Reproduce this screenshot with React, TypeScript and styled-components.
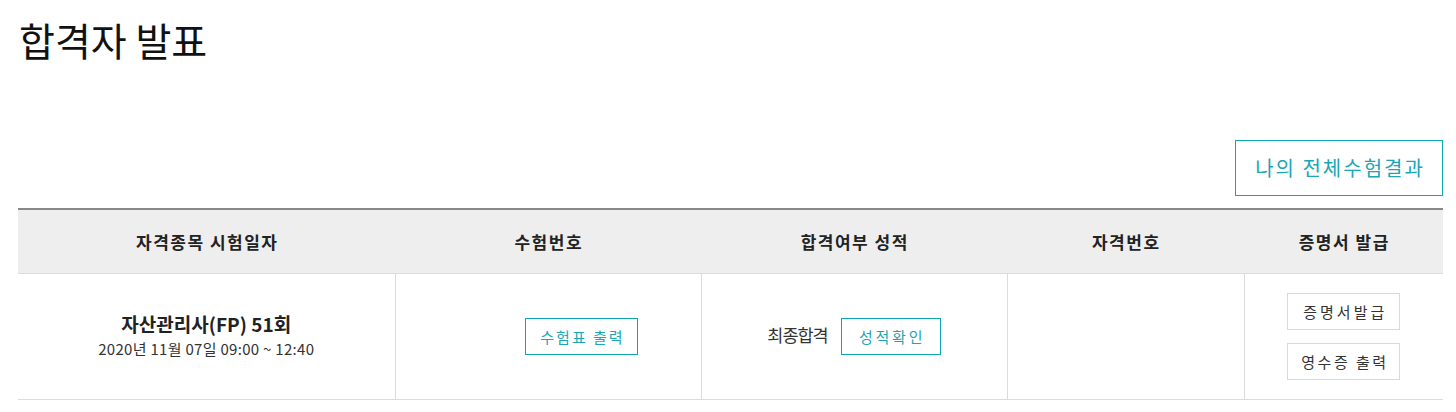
import React from "react";
import styled, { createGlobalStyle } from "styled-components";

const Global = createGlobalStyle`
  html, body { margin: 0; padding: 0; background: #fff; }
  body { font-family: "Noto Sans CJK KR", "Noto Sans", sans-serif; color: #222; }
  * { box-sizing: border-box; }
`;

const Page = styled.div`
  width: 1456px;
  padding: 14px 13px 0 18px;
`;

const Title = styled.h1`
  margin: 0 0 0 1px;
  font-size: 39px;
  font-weight: 400;
  line-height: 50px;
  color: #111;
  letter-spacing: 0;
`;

const Toolbar = styled.div`
  display: flex;
  justify-content: flex-end;
  margin-top: 76px;
  margin-bottom: 12px;
`;

const OutlineButton = styled.button<{ $tone?: "teal" | "gray"; $w: number; $h?: number; $size?: number; $ls?: number }>`
  width: ${(p) => p.$w}px;
  height: ${(p) => p.$h ?? 37}px;
  padding: 0 0 0 ${(p) => p.$ls ?? 2.5}px;
  background: #fff;
  border: 1px solid ${(p) => (p.$tone === "gray" ? "#d9d9d9" : "#0fa5b4")};
  color: ${(p) => (p.$tone === "gray" ? "#333" : "#1aa6b5")};
  font-family: "Noto Sans CJK KR", "Noto Sans", sans-serif;
  font-size: ${(p) => p.$size ?? 15}px;
  letter-spacing: ${(p) => p.$ls ?? 2.5}px;
  line-height: 1;
  cursor: pointer;
  display: inline-flex;
  align-items: center;
  justify-content: center;
`;

const Table = styled.table`
  width: 1425px;
  border-collapse: collapse;
  table-layout: fixed;
  border-top: 2px solid #888;
`;

const Th = styled.th<{ $w: number }>`
  width: ${(p) => p.$w}px;
  height: 64px;
  background: #eeeeee;
  border-bottom: 1px solid #dcdcdc;
  font-size: 17px;
  font-weight: 700;
  color: #222;
  text-align: center;
  letter-spacing: 1.5px;
  padding: 0 0 0 1.5px;
`;

const Td = styled.td<{ $last?: boolean }>`
  height: 126px;
  padding: 0;
  border-bottom: 1px solid #dcdcdc;
  border-right: ${(p) => (p.$last ? "none" : "1px solid #dcdcdc")};
  text-align: center;
  vertical-align: middle;
`;

const CellRow = styled.div<{ $offset?: number }>`
  display: flex;
  align-items: center;
  justify-content: center;
  gap: 13px;
  padding-left: ${(p) => p.$offset ?? 0}px;
`;

const CellStack = styled.div`
  display: flex;
  flex-direction: column;
  align-items: center;
  gap: 13px;
`;

const ExamName = styled.div`
  font-size: 19px;
  font-weight: 700;
  color: #222;
  line-height: 27px;
  letter-spacing: 0;
  margin-top: -4px;
`;

const ExamDate = styled.div`
  font-size: 15px;
  color: #333;
  line-height: 20px;
  letter-spacing: 0.3px;
  margin-top: 2px;
`;

const ResultText = styled.span`
  font-size: 17.5px;
  color: #333;
  letter-spacing: -1px;
  margin-top: -3px;
`;

export default function App() {
  return (
    <>
      <Global />
      <Page>
        <Title>합격자 발표</Title>
        <Toolbar>
          <OutlineButton $w={208} $h={56} $size={20} $ls={2}>나의 전체수험결과</OutlineButton>
        </Toolbar>
        <Table>
          <thead>
            <tr>
              <Th $w={377}>자격종목 시험일자</Th>
              <Th $w={306}>수험번호</Th>
              <Th $w={306}>합격여부 성적</Th>
              <Th $w={237}>자격번호</Th>
              <Th $w={199}>증명서 발급</Th>
            </tr>
          </thead>
          <tbody>
            <tr>
              <Td>
                <ExamName>자산관리사(FP) 51회</ExamName>
                <ExamDate>2020년 11월 07일 09:00 ~ 12:40</ExamDate>
              </Td>
              <Td>
                <CellRow $offset={67}>
                  <OutlineButton $w={113} $ls={2}>수험표 출력</OutlineButton>
                </CellRow>
              </Td>
              <Td>
                <CellRow>
                  <ResultText>최종합격</ResultText>
                  <OutlineButton $w={100} $ls={2.8}>성적확인</OutlineButton>
                </CellRow>
              </Td>
              <Td />
              <Td $last>
                <CellStack>
                  <OutlineButton $tone="gray" $w={113} $ls={3}>증명서발급</OutlineButton>
                  <OutlineButton $tone="gray" $w={113} $ls={2.5}>영수증 출력</OutlineButton>
                </CellStack>
              </Td>
            </tr>
          </tbody>
        </Table>
      </Page>
    </>
  );
}
